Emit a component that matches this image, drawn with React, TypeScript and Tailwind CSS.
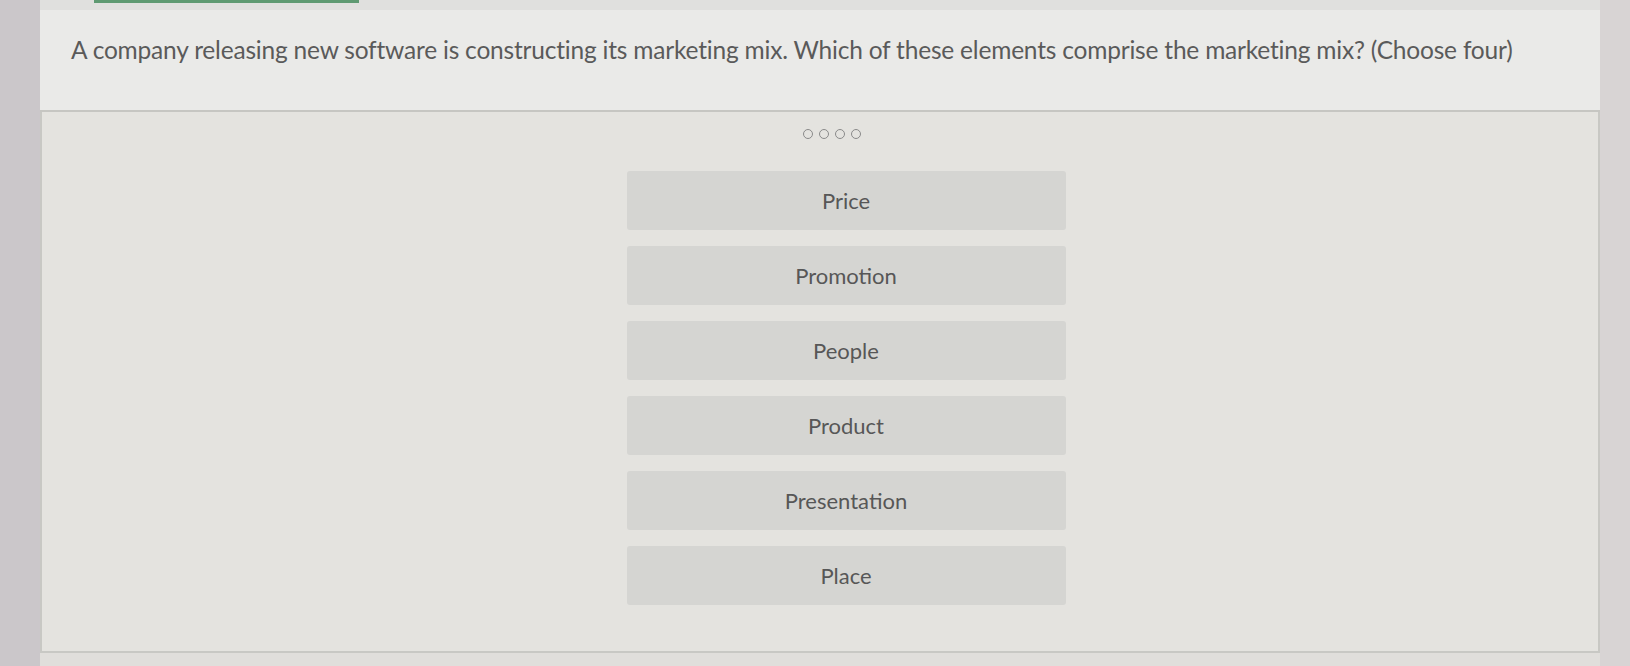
import React from 'react';

const options = ['Price', 'Promotion', 'People', 'Product', 'Presentation', 'Place'];

export default function App() {
  return (
    <div
      className="flex h-[666px] w-full overflow-hidden bg-[#dcdcd8] text-[#5a5a5a]"
      style={{ fontFamily: 'Lato, "Open Sans", sans-serif' }}
    >
      {/* left edge of the screen */}
      <div className="w-[40px] shrink-0 bg-[#cbc7ca]" />

      <div className="flex w-[1560px] shrink-0 flex-col">
        {/* progress bar */}
        <div className="flex h-[10px] bg-[#e0e0de]">
          <div className="ml-[54px] h-[3px] w-[265px] bg-[#5f9a72]" />
        </div>

        {/* question */}
        <div className="h-[102px] border-b-2 border-[#c6c6c2] bg-[#eaeae8] pl-[31px] pt-[22px]">
          <p className="text-[24.5px] tracking-[-0.2px]">
            A company releasing new software is constructing its marketing mix. Which of these elements comprise the
            marketing mix? (Choose four)
          </p>
        </div>

        {/* answers */}
        <div className="flex h-[541px] flex-col items-center border-x-2 border-b-2 border-[#c8c8c4] bg-[#e4e3df] pt-[17px]">
          <div className="ml-[24px] flex gap-[6px]">
            {[0, 1, 2, 3].map((i) => (
              <span key={i} className="h-[10px] w-[10px] rounded-full border-[1.5px] border-[#8a8a8a]" />
            ))}
          </div>
          <div className="mt-[32px] flex flex-col gap-[16px] pl-[52px]">
            {options.map((o) => (
              <button
                key={o}
                className="flex h-[59px] w-[439px] items-center justify-center rounded-[3px] bg-[#d5d5d2] text-[22px] text-[#575757]"
              >
                {o}
              </button>
            ))}
          </div>
        </div>

        <div className="flex-1 bg-[#e0dedb]" />
      </div>

      {/* right edge */}
      <div className="flex-1 bg-[#d8d4d4]" />
    </div>
  );
}
